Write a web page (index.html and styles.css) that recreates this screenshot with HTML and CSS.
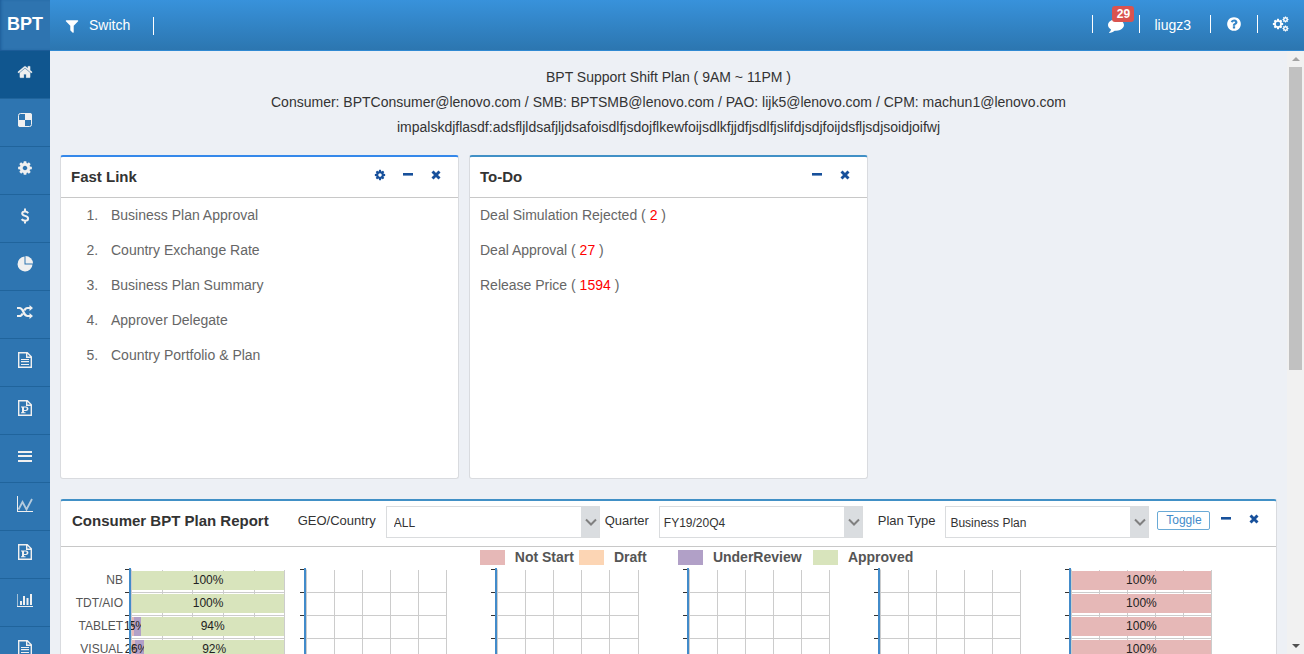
FILE: index.html
```html
<!DOCTYPE html>
<html lang="en">
<head>
<meta charset="utf-8">
<title>BPT</title>
<link rel="stylesheet" href="styles.css">
</head>
<body>
<svg class="sprite" aria-hidden="true">
  <symbol id="home" viewBox="0 0 1792 1792"><path d="M1472 992v480q0 26-19 45t-45 19h-384v-384h-256v384h-384q-26 0-45-19t-19-45v-480q0-1 .5-3t.5-3l575-474 575 474q1 2 1 6zm223-69l-62 74q-8 9-21 11h-3q-13 0-21-7l-692-577-692 577q-12 8-24 7-13-2-21-11l-62-74q-8-10-7-23.5t11-21.5l719-599q32-26 76-26t76 26l244 204v-195q0-14 9-23t23-9h192q14 0 23 9t9 23v408l219 182q10 8 11 21.5t-7 23.5z" stroke="currentColor" stroke-width="30"/></symbol>
  <symbol id="cog" viewBox="0 0 1792 1792"><path d="M1152 896q0-106-75-181t-181-75-181 75-75 181 75 181 181 75 181-75 75-181zm512-109v222q0 12-8 23t-20 13l-185 28q-19 54-39 91 35 50 107 138 10 12 10 25t-9 23q-27 37-99 108t-94 71q-12 0-26-9l-138-108q-44 23-91 38-16 136-29 186-7 28-36 28h-222q-14 0-24.500-8.500t-11.500-21.500l-28-184q-49-16-90-37l-141 107q-10 9-25 9-14 0-25-11-126-114-165-168-7-10-7-23 0-12 8-23 15-21 51-66.500t54-70.500q-27-50-41-99l-183-27q-13-2-21-12.500t-8-23.500v-222q0-12 8-23t19-13l186-28q14-46 39-92-40-57-107-138-10-12-10-24 0-10 9-23 26-36 98.500-107.500t94.500-71.500q13 0 26 10l138 107q44-23 91-38 16-136 29-186 7-28 36-28h222q14 0 24.500 8.500t11.500 21.500l28 184q49 16 90 37l142-107q9-9 24-9 13 0 25 10 129 119 165 170 7 8 7 22 0 12-8 23-15 21-51 66.500t-54 70.500q26 50 41 98l183 28q13 2 21 12.500t8 23.500z"/></symbol>
  <symbol id="filter" viewBox="0 0 1792 1792"><path d="M1595 295q17 41-14 70l-493 493v742q0 42-39 59-13 5-25 5-27 0-45-19l-256-256q-19-19-19-45v-486l-493-493q-31-29-14-70 17-39 59-39h1280q42 0 59 39z"/></symbol>
  <symbol id="comment" viewBox="0 0 1792 1792"><path d="M1792 896q0 174-120 321.500t-326 233-450 85.500q-70 0-145-8-198 175-460 242-49 14-114 22-17 2-30.500-9t-17.500-29v-1q-3-4-.5-12t2-10 4.500-9.500l6-9 7-8.500 8-9q7-8 31-34.500t34.500-38 31-39.500 32.500-51 27-59 26-76q-157-89-247.500-220t-90.500-281q0-130 71-248.500t191-204.500 286-136.500 348-50.500q244 0 450 85.500t326 233 120 321.500z"/></symbol>
  <symbol id="help" viewBox="0 0 1792 1792"><path d="M1024 1376v-192q0-14-9-23t-23-9h-192q-14 0-23 9t-9 23v192q0 14 9 23t23 9h192q14 0 23-9t9-23zm256-672q0-88-55.500-163t-138.500-116-170-41q-243 0-371 213-15 24 8 42l132 100q7 6 19 6 16 0 25-12 53-68 86-92 34-24 86-24 48 0 85.500 26t37.500 59q0 38-20 61t-68 45q-63 28-115.500 86.500t-52.500 125.500v36q0 14 9 23t23 9h192q14 0 23-9t9-23q0-19 21.500-49.500t54.500-49.500q32-18 49-28.500t46-35 44.500-48 28-60.500 12.500-81zm384 192q0 209-103 385.500t-279.500 279.500-385.500 103-385.500-103-279.500-279.500-103-385.500 103-385.500 279.500-279.500 385.500-103 385.500 103 279.500 279.500 103 385.500z"/></symbol>
  <symbol id="cogs" viewBox="0 0 18 18"><use href="#cog" x="0" y="3" width="12" height="12"/><circle cx="6" cy="9" r="2.200" fill="#3382c4"/><use href="#cog" x="10" y="1" width="7" height="7"/><use href="#cog" x="10" y="10" width="7" height="7"/></symbol>
  <symbol id="board" viewBox="0 0 16 16"><rect x="1.500" y="1.500" width="13" height="13" rx="2" fill="none" stroke="currentColor"/><path d="M8 1h5a2 2 0 0 1 2 2v5H8zM1 8h7v7H3a2 2 0 0 1-2-2z"/></symbol>
  <symbol id="dollar" viewBox="0 0 16 16"><path d="M11.200 5.200C10.500 4.200 9.500 3.600 8 3.600c-1.700 0-2.800.8-2.800 2 0 1.400 1.200 1.900 2.800 2.300s3.100 1 3.100 2.600c0 1.400-1.300 2.200-3 2.200-1.600 0-2.800-.6-3.500-1.500M8 .5v3M8 12.500v3" fill="none" stroke="currentColor" stroke-width="2"/></symbol>
  <symbol id="pie" viewBox="0 0 16 16"><path d="M7.500 8.500V.5a7.500 7.500 0 1 0 8 8z"/><path d="M8.500 0A7.500 7.500 0 0 1 16 7.500H8.500z"/></symbol>
  <symbol id="shuffle" viewBox="0 0 16 16"><path d="M0 4h2.500C7 4 6 12 10.500 12H13M0 12h2.500c1.600 0 2.500-1 3.200-2.500M7.300 6.500C8 5 8.900 4 10.500 4H13" fill="none" stroke="currentColor" stroke-width="2.200"/><path d="M12.500 1L16 4l-3.500 3zM12.500 9l3.500 3-3.500 3z"/></symbol>
  <symbol id="file" viewBox="0 0 16 16"><path d="M1.700.7h8.600l4 4v10.600H1.700zM9.700.7v4.600h4.600" fill="none" stroke="currentColor" stroke-width="1.400"/></symbol>
  <symbol id="filetext" viewBox="0 0 16 16"><use href="#file" width="16" height="16"/><path d="M4 7h8v1H4zM4 9h8v1.200H4zM4 12h8v1H4z"/></symbol>
  <symbol id="filep" viewBox="0 0 16 16"><use href="#file" width="16" height="16"/><path d="M4 6.500h5c3.300 0 3.300 4.500 0 4.500H7v1.200h1.500v1H4v-1h1V7.500H4zM7 7.500V10h1.500c1.700 0 1.700-2.500 0-2.500z" fill-rule="evenodd"/></symbol>
  <symbol id="bars" viewBox="0 0 16 16"><path d="M1 3h14v2H1zM1 7h14v2H1zM1 12h14v2H1z"/></symbol>
  <symbol id="line" viewBox="0 0 16 16"><path d="M0 0h1v15h15v1H0z"/><path d="M1.500 13.500L5.500 6l4 7.500L15 3" fill="none" stroke="currentColor" stroke-width="1.800" opacity=".7"/></symbol>
  <symbol id="chart" viewBox="0 0 16 16"><path d="M0 2h.6v12H16v1H0zM3 9h2v4H3zM6 4h2v9H6zM9.500 6h2v7h-2zM13 2h2v11h-2z"/></symbol>
  <symbol id="minus" viewBox="0 0 12 12"><path d="M1 4h10v2.600H1z"/></symbol>
  <symbol id="close" viewBox="0 0 12 12"><path d="M2.500 2.500l7 7M9.500 2.500l-7 7" fill="none" stroke="currentColor" stroke-width="2.900"/></symbol>
  <symbol id="chevron" viewBox="0 0 12 12"><path d="M1 3.500l5 5 5-5" fill="none" stroke="currentColor" stroke-width="2"/></symbol>
</svg>

<header class="topbar">
  <a class="logo" href="#">BPT</a>
  <a class="switch" href="#"><svg class="icon"><use href="#filter"/></svg><span>Switch</span></a>
  <nav class="topnav" aria-label="Account">
    <a class="topnav-item topnav-messages" href="#" aria-label="Messages"><svg class="icon"><use href="#comment"/></svg><span class="badge">29</span></a>
    <a class="topnav-item topnav-user" href="#">liugz3</a>
    <a class="topnav-item" href="#" aria-label="Help"><svg class="icon"><use href="#help"/></svg></a>
    <a class="topnav-item" href="#" aria-label="Settings"><svg class="icon icon-large"><use href="#cogs"/></svg></a>
  </nav>
</header>

<div class="shell">
  <nav class="sidebar" aria-label="Main">
    <a class="side-item active" href="#" aria-label="Home"><svg class="icon"><use href="#home"/></svg></a>
    <a class="side-item" href="#" aria-label="Board"><svg class="icon"><use href="#board"/></svg></a>
    <a class="side-item" href="#" aria-label="Configuration"><svg class="icon"><use href="#cog"/></svg></a>
    <a class="side-item" href="#" aria-label="Pricing"><svg class="icon"><use href="#dollar"/></svg></a>
    <a class="side-item" href="#" aria-label="Share"><svg class="icon"><use href="#pie"/></svg></a>
    <a class="side-item" href="#" aria-label="Exchange"><svg class="icon"><use href="#shuffle"/></svg></a>
    <a class="side-item" href="#" aria-label="Documents"><svg class="icon"><use href="#filetext"/></svg></a>
    <a class="side-item" href="#" aria-label="Plans"><svg class="icon"><use href="#filep"/></svg></a>
    <a class="side-item" href="#" aria-label="Lists"><svg class="icon"><use href="#bars"/></svg></a>
    <a class="side-item" href="#" aria-label="Trends"><svg class="icon"><use href="#line"/></svg></a>
    <a class="side-item" href="#" aria-label="Portfolio"><svg class="icon"><use href="#filep"/></svg></a>
    <a class="side-item" href="#" aria-label="Reports"><svg class="icon"><use href="#chart"/></svg></a>
    <a class="side-item" href="#" aria-label="Files"><svg class="icon"><use href="#filetext"/></svg></a>
  </nav>

  <main class="content">
    <div class="notice">
      <p>BPT Support Shift Plan ( 9AM ~ 11PM )</p>
      <p>Consumer: BPTConsumer@lenovo.com / SMB: BPTSMB@lenovo.com / PAO: lijk5@lenovo.com / CPM: machun1@lenovo.com</p>
      <p>impalskdjflasdf:adsfljldsafjljdsafoisdlfjsdojflkewfoijsdlkfjjdfjsdlfjslifdjsdjfoijdsfljsdjsoidjoifwj</p>
    </div>

    <div class="cards">
      <section class="card card-bright">
        <div class="card-head">
          <h2>Fast Link</h2>
          <div class="tools">
            <button aria-label="Settings"><svg><use href="#cog"/></svg></button>
            <button aria-label="Collapse"><svg><use href="#minus"/></svg></button>
            <button aria-label="Close"><svg><use href="#close"/></svg></button>
          </div>
        </div>
        <ol class="links">
          <li><a href="#">Business Plan Approval</a></li>
          <li><a href="#">Country Exchange Rate</a></li>
          <li><a href="#">Business Plan Summary</a></li>
          <li><a href="#">Approver Delegate</a></li>
          <li><a href="#">Country Portfolio &amp; Plan</a></li>
        </ol>
      </section>
      <section class="card">
        <div class="card-head">
          <h2>To-Do</h2>
          <div class="tools">
            <button aria-label="Collapse"><svg><use href="#minus"/></svg></button>
            <button aria-label="Close"><svg><use href="#close"/></svg></button>
          </div>
        </div>
        <ul class="todos">
          <li><a href="#">Deal Simulation Rejected ( <em>2</em> )</a></li>
          <li><a href="#">Deal Approval ( <em>27</em> )</a></li>
          <li><a href="#">Release Price ( <em>1594</em> )</a></li>
        </ul>
      </section>
    </div>

    <section class="card report">
      <div class="card-head report-head">
        <h2>Consumer BPT Plan Report</h2>
        <div class="field field-geo">
          <label for="geo">GEO/Country</label>
          <span class="select select-wide"><select id="geo"><option>ALL</option></select><svg><use href="#chevron"/></svg></span>
        </div>
        <div class="field field-quarter">
          <label for="quarter">Quarter</label>
          <span class="select"><select id="quarter"><option>FY19/20Q4</option></select><svg><use href="#chevron"/></svg></span>
        </div>
        <div class="field field-plan">
          <label for="plan">Plan Type</label>
          <span class="select"><select id="plan"><option>Business Plan</option></select><svg><use href="#chevron"/></svg></span>
        </div>
        <div class="toggle-wrap"><button class="toggle">Toggle</button></div>
        <div class="tools">
          <button aria-label="Collapse"><svg><use href="#minus"/></svg></button>
          <button aria-label="Close"><svg><use href="#close"/></svg></button>
        </div>
      </div>
      <ul class="legend">
        <li><i class="swatch not-start"></i>Not Start</li>
        <li><i class="swatch draft"></i>Draft</li>
        <li class="legend-wide"><i class="swatch review"></i>UnderReview</li>
        <li><i class="swatch approved"></i>Approved</li>
      </ul>
      <div class="charts" id="charts"></div>
    </section>
  </main>

  <div class="scrollbar" aria-hidden="true">
    <span class="arrow arrow-up"></span>
    <span class="track"><span class="thumb"></span></span>
    <span class="arrow arrow-down"></span>
  </div>
</div>
<script src="charts.js"></script>
</body>
</html>
```
FILE: charts.js
```js
const labels = ['NB', 'TDT/AIO', 'TABLET', 'VISUAL'];
const empty = [[], [], [], []];
const charts = [
  [[['approved', 100]], [['approved', 100]],
   [['not-start', 1], ['review', 5], ['approved', 94]],
   [['not-start', 2], ['review', 6], ['approved', 92]]],
  empty, empty, empty, empty,
  labels.map(() => [['not-start', 100]])
];

document.getElementById('charts').innerHTML = charts.map((rows, index) => {
  const names = index === 0
    ? `<div class="names">${labels.map(name => `<span>${name}</span>`).join('')}</div>`
    : '';
  const ticks = `<div class="ticks">${labels.map(() => '<i></i>').join('')}</div>`;
  const plot = rows.map(row => {
    const segments = row.map(([kind, value]) =>
      `<span class="segment ${kind}" style="width:${value}%">${value}%</span>`).join('');
    const bar = row.length ? `<div class="bar">${segments}</div>` : '';
    return `<div class="plot-row"><i></i><i></i><i></i><i></i><i></i>${bar}</div>`;
  }).join('');
  return `<div class="chart">${names}${ticks}<div class="plot">${plot}</div></div>`;
}).join('');
```
FILE: styles.css
```css
* { box-sizing: border-box; }
body {
  margin: 0;
  height: 100vh;
  display: flex;
  flex-direction: column;
  overflow: hidden;
  background: #edf0f5;
  color: #333;
  font: 14px/20px "Liberation Sans", Arial, sans-serif;
}
a { color: inherit; text-decoration: none; }
h2, p, ul, ol { margin: 0; padding: 0; }
ul { list-style: none; }
button { font: inherit; cursor: pointer; }
svg { fill: currentColor; display: block; }
.sprite { position: absolute; width: 0; height: 0; }
.icon { width: 16px; height: 16px; flex: none; }
.icon-large { width: 18px; height: 18px; }

.topbar {
  flex: none;
  height: 51px;
  display: flex;
  align-items: center;
  color: #fff;
  background: linear-gradient(#3892db, #2c76b0);
  border-bottom: 1px solid #3089d2;
}
.logo {
  align-self: stretch;
  width: 50px;
  line-height: 48px;
  text-align: center;
  font-size: 18px;
  font-weight: bold;
  background: #2e74b0;
  box-shadow: inset 2px 0 3px -1px #1c5c98, 0 1px 0 #1c5c98;
}
.switch {
  display: flex;
  align-items: center;
  gap: 9px;
  height: 18px;
  margin-top: 2px;
  padding: 0 23px 0 14px;
  border-right: 1px solid #fff;
}
.switch span { padding-bottom: 2px; }
.topnav { display: flex; margin-left: auto; padding-bottom: 2px; }
.topnav-item {
  position: relative;
  width: 47px;
  height: 18px;
  display: flex;
  align-items: center;
  justify-content: center;
  border-left: 1px solid #fff;
}
.topnav-messages { padding-top: 2px; }
.topnav-user { width: auto; padding: 2px 19px 0 14px; }
.badge {
  position: absolute;
  left: 19px;
  top: -9px;
  width: 22px;
  height: 16px;
  border-radius: 3px;
  background: #d9534f;
  font-size: 12px;
  font-weight: bold;
  line-height: 16px;
  text-align: center;
}

.shell { flex: 1; min-height: 0; display: flex; }
.sidebar { flex: none; width: 50px; overflow: hidden; background: #2e75b1; color: #f0f0f0; }
.side-item {
  display: flex;
  justify-content: center;
  height: 48px;
  padding-top: 13px;
  border-bottom: 1px solid #20649c;
}
.active { background: #10568f; }

.content { flex: 1; min-width: 0; padding: 14px 10px 0; overflow: hidden; }
.notice { padding-bottom: 15px; text-align: center; line-height: 25px; }
.cards {
  display: grid;
  grid-template-columns: repeat(3, minmax(0, 1fr));
  gap: 10px;
  margin-bottom: 20px;
}
.card {
  min-height: 324px;
  background: #fff;
  border: 1px solid #d9dbdf;
  border-top: 2px solid #4190c6;
  border-radius: 3px;
}
.card-bright { border-top-color: #3588ea; }
.card-head {
  display: flex;
  align-items: center;
  min-height: 41px;
  padding: 0 8px 0 10px;
  border-bottom: 1px solid #c8c8c8;
}
h2 { font-size: 15px; font-weight: bold; }
.tools { display: flex; margin-left: auto; padding-bottom: 4px; }
.tools button {
  width: 28px;
  height: 20px;
  padding: 0;
  display: grid;
  place-items: center;
  border: 0;
  background: none;
  color: #17509b;
}
.tools svg { width: 12px; height: 12px; }
.links, .todos { line-height: 35px; color: #666; }
.links { padding-left: 41px; }
.links a { padding-left: 9px; }
.todos { padding-left: 10px; }
.todos em { font-style: normal; color: #f00; }

.report-head { min-height: 46px; padding: 0 8px 3px 11px; }
.report-head h2 { padding-bottom: 2px; }
.report-head .tools { padding-bottom: 6px; }
.field { display: flex; align-items: center; gap: 10px; font-size: 13px; }
.field label { padding-bottom: 2px; }
.field-geo { margin-left: 29px; }
.field-quarter { margin-left: 5px; }
.field-plan { margin-left: 15px; }
.select { position: relative; width: 204px; }
.select-wide { width: 214px; }
.select select {
  width: 100%;
  height: 32px;
  padding: 2px 24px 0 4px;
  appearance: none;
  border: 1px solid #dadcde;
  border-radius: 0;
  background: linear-gradient(#dadde0, #dadde0) right / 18px 100% no-repeat #fff;
  color: #333;
  font: 12px "Liberation Sans", Arial, sans-serif;
}
.select-wide select { padding-left: 7px; }
.select svg {
  position: absolute;
  right: 3px;
  top: 10px;
  width: 12px;
  height: 12px;
  color: #808080;
  pointer-events: none;
}
.toggle-wrap { display: flex; margin-left: 8px; padding-bottom: 4px; }
.toggle {
  width: 53px;
  height: 19px;
  padding: 0;
  border: 1px solid #6aaad6;
  border-radius: 2px;
  background: #fff;
  color: #428bca;
  font-size: 12px;
  line-height: 16px;
}

.legend {
  display: flex;
  justify-content: center;
  gap: 5px;
  padding: 0 0 2px 56px;
  color: #555;
  font-weight: bold;
}
.legend li { display: flex; align-items: center; gap: 10px; min-width: 94px; }
.legend .legend-wide { min-width: 130px; }
.swatch { width: 25px; height: 15px; }
.not-start { background: #e6b8b7; }
.draft { background: #fcd5b4; }
.review { background: #b1a0c7; }
.approved { background: #d8e4bc; }

.charts {
  display: grid;
  grid-template-columns: 239fr repeat(5, 191fr);
  padding-right: 20px;
  font-size: 12px;
}
.chart { display: flex; padding-right: 44px; }
.chart:first-child { padding-right: 15px; }
.names { width: 64px; padding-right: 2px; text-align: right; color: #555; }
.names span { display: block; line-height: 23px; }
.ticks { width: 4px; }
.ticks i { display: block; height: 23px; border-top: 1px solid #333; }
.plot { position: relative; flex: 1; padding-left: 2px; }
.plot::before {
  content: "";
  position: absolute;
  z-index: 1;
  left: 0;
  top: -1px;
  bottom: 0;
  width: 2px;
  background: #428bca;
}
.plot-row {
  position: relative;
  display: flex;
  height: 23px;
  border-left: 1px solid #ccc;
  border-top: 1px solid #ccc;
}
.plot-row:first-child { border-top-color: #fff; }
.plot-row > i { flex: 1; border-right: 1px solid #ccc; }
.bar { position: absolute; left: 0; right: 1px; top: 1px; height: 19px; display: flex; }
.segment {
  z-index: 0;
  display: flex;
  justify-content: center;
  line-height: 18px;
  color: #222;
}

.scrollbar {
  flex: none;
  width: 17px;
  display: flex;
  flex-direction: column;
  align-items: center;
  background: #f1f1f1;
}
.arrow { height: 16px; display: grid; place-items: center; }
.arrow::before { content: ""; border: 4px solid transparent; }
.arrow-up::before { border-top: 0; border-bottom-color: #a3a3a3; }
.arrow-down::before { border-bottom: 0; border-top-color: #505050; }
.track { flex: 1; width: 13px; }
.thumb { display: block; height: 53%; background: #c1c1c1; }
```
